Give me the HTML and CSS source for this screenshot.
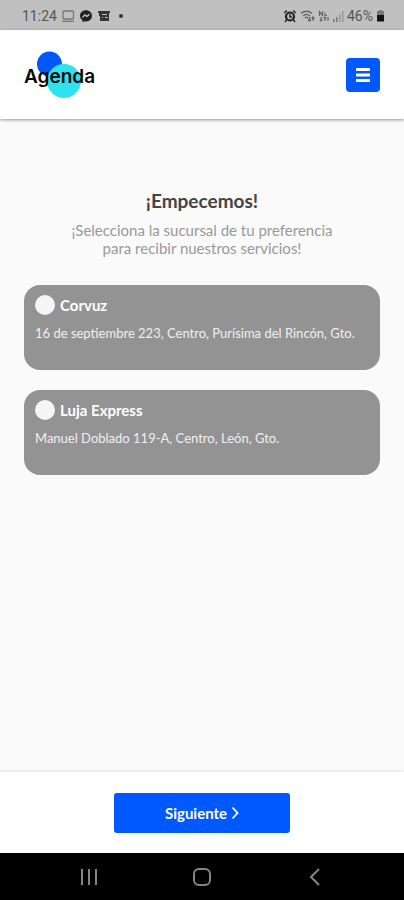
FILE: index.html
```html
<!DOCTYPE html>
<html lang="es">
<head>
<meta charset="utf-8">
<meta name="viewport" content="width=device-width, initial-scale=1">
<title>Agenda</title>
<link rel="stylesheet" href="styles.css">
</head>
<body>
<div class="status">
  <div class="status-group">
    <span class="clock">11:24</span>
    <svg width="14" height="14" viewBox="0 0 14 14" fill="none" stroke="#777" stroke-width="1.3"><rect x="2" y="2" width="10.500" height="8" rx="1"/><path d="M1 12.300h12"/></svg>
    <svg width="14" height="14" viewBox="0 0 14 14"><path fill="#222" d="M7 1.200c3.500 0 6 2.400 6 5.600s-2.500 5.600-6 5.600l-1.500-.2-2 1v-2C1.900 10.200 1 8.600 1 6.800c0-3.200 2.500-5.600 6-5.600z"/><path d="m3.500 8.400 2.300-2.500 2 1.500 2.700-2" fill="none" stroke="#c0c0c0" stroke-width="1.400"/></svg>
    <svg width="14" height="14" viewBox="0 0 14 14"><path fill="#333" fill-rule="evenodd" d="M1 2h12v2h-1v8H3V7H2V4H1zM5 5v1h5V5zM5 8v1h1V8zM8 8v1h3V8z"/></svg>
    <span class="dot"></span>
  </div>
  <div class="status-group status-right">
    <svg width="14" height="14" viewBox="0 0 14 14"><circle cx="7" cy="7.500" r="4" fill="none" stroke="#222" stroke-width="2.200"/><path d="M7 5v3h2M1.200 4l2.600-2.500M12.800 4l-2.600-2.500M3.500 11l-1.500 2M10.500 11l1.500 2" fill="none" stroke="#222" stroke-width="1.400"/></svg>
    <svg width="15" height="14" viewBox="0 0 15 14" fill="none" stroke="#666" stroke-width="1.300"><path d="M1 4.500c3-3 8-3 11 0M3 7c2-2 5-2 7 0M5 9c1-1 2-1 3 0M9.500 8v4M8 10.500 9.500 12 11 10.500M13 12V8M11.600 9.500 13 8l1.400 1.500"/></svg>
    <svg width="11" height="14" viewBox="0 0 11 14" fill="none" stroke="#666" stroke-width="1.200"><path d="M1.500 7V2.500l3 4V2M7 3.500v3h2M3 8v4M1.800 10.800 3 12l1.300-1.200M7 12V8M5.700 9.300 7 8l1.300 1.300M10 8v4"/></svg>
    <svg width="12" height="14" viewBox="0 0 12 14"><path fill="#777" d="M1 10h1.500v3H1zM4 8h1.500v5H4z"/><path fill="#999" d="M7 5h1.500v8H7zM10 2h1.500v11H10z"/></svg>
    <span class="clock">46%</span>
    <svg width="9" height="14" viewBox="0 0 9 14"><path fill="#777" d="M3 1h3v1h2v5H1V2h2z"/><path fill="#111" d="M1 6h7v6.500H1z"/></svg>
  </div>
</div>

<header class="header">
  <a class="logo" href="#">
    <svg width="74" height="48" viewBox="0 0 74 48" aria-hidden="true"><circle cx="25.500" cy="13" r="12.500" fill="#0058f8"/><circle cx="40" cy="30" r="17" fill="#2ee3ee"/></svg>
    <span>Agenda</span>
  </a>
  <button class="menu" type="button" aria-label="Menú">
    <svg width="18" height="18" viewBox="0 0 18 18"><path d="M2 3.500h14M2 9h14M2 14.500h14" stroke="#fff" stroke-width="2.800"/></svg>
  </button>
</header>

<main class="main">
  <h1>¡Empecemos!</h1>
  <p class="intro">¡Selecciona la sucursal de tu preferencia<br>para recibir nuestros servicios!</p>
  <form class="options" id="branches">
    <label class="card">
      <span class="card-head"><input type="radio" name="branch" value="corvuz"><strong>Corvuz</strong></span>
      <span class="address">16 de septiembre 223, Centro, Purísima del Rincón, Gto.</span>
    </label>
    <label class="card">
      <span class="card-head"><input type="radio" name="branch" value="luja"><strong>Luja Express</strong></span>
      <span class="address">Manuel Doblado 119-A, Centro, León, Gto.</span>
    </label>
  </form>
</main>

<footer class="footer">
  <button class="next" type="submit" form="branches">Siguiente
    <svg width="8" height="14" viewBox="0 0 8 14"><path d="m1.500 1.500 5 5.500-5 5.500" fill="none" stroke="#fff" stroke-width="1.800"/></svg>
  </button>
</footer>

<nav class="system" aria-label="Sistema">
  <button type="button" aria-label="Recientes"><svg width="20" height="20" viewBox="0 0 20 20"><path d="M3 2v16M10 2v16M17 2v16" stroke="#858585" stroke-width="2"/></svg></button>
  <button type="button" aria-label="Inicio"><svg width="20" height="20" viewBox="0 0 20 20"><rect x="2" y="2" width="16" height="16" rx="5" fill="none" stroke="#858585" stroke-width="2"/></svg></button>
  <button type="button" aria-label="Atrás"><svg width="20" height="20" viewBox="0 0 20 20"><path d="m14 2-8 8 8 8" fill="none" stroke="#858585" stroke-width="2"/></svg></button>
</nav>
</body>
</html>
```

FILE: styles.css
```css
* { box-sizing: border-box; }

body {
  margin: 0;
  min-height: 100vh;
  display: flex;
  flex-direction: column;
  background: #fafafa;
  color: #444;
  font-family: Lato, "Liberation Sans", sans-serif;
}

button {
  border: 0;
  padding: 0;
  cursor: pointer;
}

svg { display: block; }

.status {
  display: flex;
  justify-content: space-between;
  height: 30px;
  padding: 2px 19px 0 22px;
  background: #c0c0c0;
  color: #555;
  font: 14px Roboto, sans-serif;
}

.status-group {
  display: flex;
  align-items: center;
  gap: 4px;
}

.status-right { gap: 3px; }

.dot {
  width: 4px;
  height: 4px;
  margin-left: 4px;
  border-radius: 50%;
  background: #333;
}

.header {
  display: flex;
  align-items: center;
  justify-content: space-between;
  height: 89px;
  padding: 0 24px;
  background: #fff;
  box-shadow: 0 1px 3px rgba(0, 0, 0, 0.4);
}

.logo {
  display: grid;
  align-items: center;
  color: #080808;
  font: 600 19px/24px Inter, sans-serif;
  text-decoration: none;
}

.logo > * { grid-area: 1 / 1; }

.logo span { padding-top: 4px; }

.menu {
  display: grid;
  place-items: center;
  width: 34px;
  height: 34px;
  border-radius: 4px;
  background: #0058ff;
}

.main {
  flex: 1;
  padding: 70px 24px 24px;
}

h1 {
  margin: 0;
  font-size: 19px;
  line-height: 24px;
  text-align: center;
}

.intro {
  margin: 8px 0 28px;
  color: #999;
  font-size: 15px;
  line-height: 18px;
  text-align: center;
}

.options {
  display: grid;
  gap: 20px;
}

.card {
  display: block;
  min-height: 85px;
  padding: 10px 11px;
  border-radius: 16px;
  background: #939393;
  color: #fff;
  cursor: pointer;
}

.card-head {
  display: flex;
  align-items: center;
  gap: 5px;
  font-size: 15px;
  line-height: 20px;
}

.card input {
  appearance: none;
  width: 20px;
  height: 20px;
  margin: 0;
  border-radius: 50%;
  background: #f5f5f5;
}

.card input:checked { border: 5px solid #0058ff; }

.address {
  display: block;
  margin-top: 9px;
  color: #f0f0f0;
  font-size: 13px;
  line-height: 18px;
}

.footer {
  display: flex;
  justify-content: center;
  padding: 21px 24px 20px;
  background: #fff;
  box-shadow: 0 -1px 3px rgba(0, 0, 0, 0.1);
}

.next {
  display: flex;
  align-items: center;
  justify-content: center;
  gap: 4px;
  width: 176px;
  height: 40px;
  border-radius: 3px;
  background: #0058ff;
  color: #fff;
  font: bold 15px/20px Lato, sans-serif;
}

.system {
  display: flex;
  justify-content: space-around;
  align-items: center;
  height: 47px;
  padding: 0 32px;
  background: #000;
}

.system button { background: none; }
```
